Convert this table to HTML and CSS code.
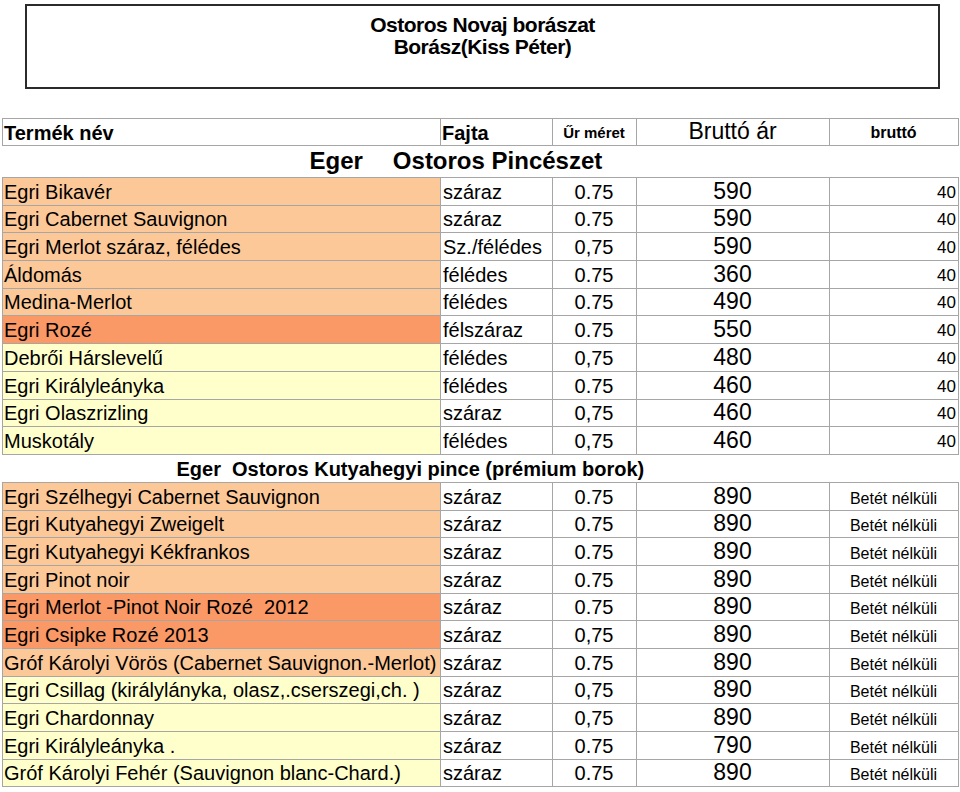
FILE: index.html
```html
<!DOCTYPE html>
<html lang="hu">
<head>
<meta charset="utf-8">
<title>Ostoros Novaj borászat</title>
<link rel="stylesheet" href="styles.css">
</head>
<body>
<div class="page">
  <header class="title-box">
    <div>Ostoros Novaj borászat</div>
    <div>Borász(Kiss Péter)</div>
  </header>
  <table class="price-table">
    <colgroup>
      <col class="c-name"><col class="c-type"><col class="c-size"><col class="c-price"><col class="c-dep">
    </colgroup>
    <thead>
      <tr class="head-row">
        <th class="h-name">Termék név</th>
        <th class="h-type">Fajta</th>
        <th class="h-size">Űr méret</th>
        <th class="h-price">Bruttó ár</th>
        <th class="h-dep">bruttó</th>
      </tr>
    </thead>
    <tbody>
      <tr class="section s1">
        <td colspan="5"><span class="sec-a">Eger</span><span class="sec-b">Ostoros Pincészet</span></td>
      </tr>
      <tr class="row"><td class="name red">Egri Bikavér</td><td class="type">száraz</td><td class="size">0.75</td><td class="price">590</td><td class="dep num">40</td></tr>
      <tr class="row"><td class="name red">Egri Cabernet Sauvignon</td><td class="type">száraz</td><td class="size">0.75</td><td class="price">590</td><td class="dep num">40</td></tr>
      <tr class="row"><td class="name red">Egri Merlot száraz, félédes</td><td class="type">Sz./félédes</td><td class="size">0,75</td><td class="price">590</td><td class="dep num">40</td></tr>
      <tr class="row"><td class="name red">Áldomás</td><td class="type">félédes</td><td class="size">0.75</td><td class="price">360</td><td class="dep num">40</td></tr>
      <tr class="row"><td class="name red">Medina-Merlot</td><td class="type">félédes</td><td class="size">0.75</td><td class="price">490</td><td class="dep num">40</td></tr>
      <tr class="row"><td class="name rose">Egri Rozé</td><td class="type">félszáraz</td><td class="size">0.75</td><td class="price">550</td><td class="dep num">40</td></tr>
      <tr class="row"><td class="name white">Debrői Hárslevelű</td><td class="type">félédes</td><td class="size">0,75</td><td class="price">480</td><td class="dep num">40</td></tr>
      <tr class="row"><td class="name white">Egri Királyleányka</td><td class="type">félédes</td><td class="size">0.75</td><td class="price">460</td><td class="dep num">40</td></tr>
      <tr class="row"><td class="name white">Egri Olaszrizling</td><td class="type">száraz</td><td class="size">0,75</td><td class="price">460</td><td class="dep num">40</td></tr>
      <tr class="row"><td class="name white">Muskotály</td><td class="type">félédes</td><td class="size">0,75</td><td class="price">460</td><td class="dep num">40</td></tr>
      <tr class="section s2">
        <td colspan="5"><span class="sec-a">Eger</span><span class="sec-b">Ostoros Kutyahegyi pince (prémium borok)</span></td>
      </tr>
      <tr class="row"><td class="name red">Egri Szélhegyi Cabernet Sauvignon</td><td class="type">száraz</td><td class="size">0.75</td><td class="price">890</td><td class="dep txt">Betét nélküli</td></tr>
      <tr class="row"><td class="name red">Egri Kutyahegyi Zweigelt</td><td class="type">száraz</td><td class="size">0.75</td><td class="price">890</td><td class="dep txt">Betét nélküli</td></tr>
      <tr class="row"><td class="name red">Egri Kutyahegyi Kékfrankos</td><td class="type">száraz</td><td class="size">0.75</td><td class="price">890</td><td class="dep txt">Betét nélküli</td></tr>
      <tr class="row"><td class="name red">Egri Pinot noir</td><td class="type">száraz</td><td class="size">0.75</td><td class="price">890</td><td class="dep txt">Betét nélküli</td></tr>
      <tr class="row"><td class="name rose">Egri Merlot -Pinot Noir Rozé&nbsp; 2012</td><td class="type">száraz</td><td class="size">0.75</td><td class="price">890</td><td class="dep txt">Betét nélküli</td></tr>
      <tr class="row"><td class="name rose">Egri Csipke Rozé 2013</td><td class="type">száraz</td><td class="size">0,75</td><td class="price">890</td><td class="dep txt">Betét nélküli</td></tr>
      <tr class="row"><td class="name red">Gróf Károlyi Vörös (Cabernet Sauvignon.-Merlot)</td><td class="type">száraz</td><td class="size">0.75</td><td class="price">890</td><td class="dep txt">Betét nélküli</td></tr>
      <tr class="row"><td class="name white">Egri Csillag (királylányka, olasz,.cserszegi,ch. )</td><td class="type">száraz</td><td class="size">0,75</td><td class="price">890</td><td class="dep txt">Betét nélküli</td></tr>
      <tr class="row"><td class="name white">Egri Chardonnay</td><td class="type">száraz</td><td class="size">0,75</td><td class="price">890</td><td class="dep txt">Betét nélküli</td></tr>
      <tr class="row"><td class="name white">Egri Királyleányka .</td><td class="type">száraz</td><td class="size">0.75</td><td class="price">790</td><td class="dep txt">Betét nélküli</td></tr>
      <tr class="row"><td class="name white">Gróf Károlyi Fehér (Sauvignon blanc-Chard.)</td><td class="type">száraz</td><td class="size">0.75</td><td class="price">890</td><td class="dep txt">Betét nélküli</td></tr>
    </tbody>
  </table>
</div>
</body>
</html>
```
FILE: styles.css
```css
html, body {
  margin: 0;
  padding: 0;
  background: #ffffff;
  color: #000000;
  font-family: "Liberation Sans", Arial, sans-serif;
}

.page {
  padding: 4px 0 0 2px;
}

.title-box {
  box-sizing: border-box;
  width: 915px;
  height: 85px;
  margin-left: 23px;
  border: 2px solid #2b2b2b;
  padding-top: 8px;
  text-align: center;
  font-weight: bold;
  font-size: 21px;
  letter-spacing: -0.5px;
  line-height: 22px;
}

.price-table {
  margin-top: 29px;
  width: 956px;
  table-layout: fixed;
  border-collapse: collapse;
}

.c-name { width: 438px; }
.c-type { width: 112px; }
.c-size { width: 84px; }
.c-price { width: 193px; }
.c-dep { width: 129px; }

.price-table th,
.price-table td {
  border: 1px solid #a6a6a6;
  padding: 0 2px 1px 1px;
  vertical-align: bottom;
  white-space: nowrap;
  overflow: visible;
}

.head-row { height: 27px; }

.head-row th {
  padding-top: 0;
  padding-bottom: 2px;
  font-weight: bold;
  line-height: 20px;
}

.h-name, .h-type {
  text-align: left;
  font-size: 20px;
}

.h-type { padding-left: 2px; }

.h-size {
  text-align: center;
  font-size: 15px;
}

.price-table th.h-price {
  text-align: center;
  font-weight: normal;
  font-size: 23px;
  line-height: 22px;
  vertical-align: middle;
  padding-bottom: 3px;
}

.h-dep {
  text-align: center;
  font-size: 16px;
}

.section td {
  border-left: none;
  border-right: none;
  font-weight: bold;
  white-space: nowrap;
}

.s1 { height: 32px; }
.s1 td {
  padding-left: 307px;
  font-size: 24px;
  line-height: 26px;
  padding-bottom: 3px;
}
.s1 .sec-b { margin-left: 30px; }

.s2 { height: 28px; }
.s2 td {
  padding-left: 174px;
  font-size: 20px;
  line-height: 23px;
  padding-bottom: 1px;
}
.s2 .sec-b { margin-left: 11px; }

.row { height: 27.7px; }

.row td {
  font-size: 20px;
  line-height: 23px;
}

.name.red { background: #fcc898; }
.name.rose { background: #fa9866; }
.name.white { background: #ffffcc; }

.type { text-align: left; }

.row td.type { padding-left: 2px; }

.size { text-align: center; }

.row td.price {
  text-align: center;
  font-size: 23px;
  line-height: 24px;
  padding-bottom: 2px;
}

.row td.dep.num {
  text-align: right;
  font-size: 17px;
  padding-right: 2px;
}

.row td.dep.txt {
  text-align: center;
  font-size: 16px;
  padding-bottom: 0;
}
```
